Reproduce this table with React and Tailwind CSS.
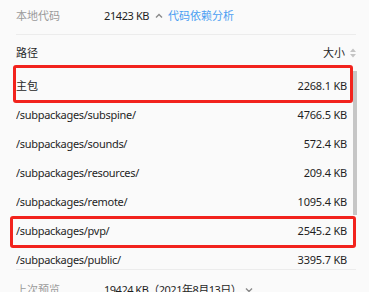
import React from 'react';

const rows = [
  { path: '主包', size: '2268.1 KB', cjk: true },
  { path: '/subpackages/subspine/', size: '4766.5 KB' },
  { path: '/subpackages/sounds/', size: '572.4 KB' },
  { path: '/subpackages/resources/', size: '209.4 KB' },
  { path: '/subpackages/remote/', size: '1095.4 KB' },
  { path: '/subpackages/pvp/', size: '2545.2 KB' },
  { path: '/subpackages/public/', size: '3395.7 KB' },
  { path: '/subpackages/ui/', size: '1210.3 KB' },
];

const Chevron = ({ up }) => (
  <svg width="8" height="6" viewBox="0 0 8 6" className="text-[#8a8a8a]">
    <polyline
      points={up ? '1,4.5 4,1.5 7,4.5' : '1,1.5 4,4.5 7,1.5'}
      fill="none"
      stroke="currentColor"
      strokeWidth="1.4"
    />
  </svg>
);

const SortIcon = () => (
  <svg width="6" height="10" viewBox="0 0 6 10" className="text-[#c4c4c4]">
    <polygon points="0,4 3,0.5 6,4" fill="currentColor" />
    <polygon points="0,6 3,9.5 6,6" fill="currentColor" />
  </svg>
);

export default function App() {
  return (
    <div
      className="relative w-[369px] h-[292px] overflow-hidden bg-[#fafafa] text-[11px] text-[#1f1f1f]"
      style={{ fontFamily: '"Noto Sans", "Noto Sans CJK SC", sans-serif' }}
    >
      <div className="pl-4 pr-[13px]">
        {/* summary */}
        <div className="h-[35px] flex items-center pb-[2px] border-b border-[#ececec]">
          <span className="w-[88px] text-[#9a9a9a]">本地代码</span>
          <span className="tracking-[-0.4px]">21423 KB</span>
          <span className="ml-[6px] mr-[5px] flex items-center"><Chevron up /></span>
          <span className="text-[#4b9ef2]">代码依赖分析</span>
        </div>

        {/* table head */}
        <div className="h-[37px] flex items-start pt-[11px] leading-[14px]">
          <span className="flex-1">路径</span>
          <span>大小</span>
          <span className="ml-[5px] mt-[2px] flex"><SortIcon /></span>
        </div>

        {/* rows */}
        <div className="h-[198px] overflow-hidden border-b border-[#ececec]">
          {rows.map((r) => (
            <div key={r.path} className="h-[29px] flex items-center justify-between pr-[9px]">
              <span className={r.cjk ? '' : 'tracking-[-0.3px]'}>{r.path}</span>
              <span className="tracking-[-0.2px]">{r.size}</span>
            </div>
          ))}
        </div>

        {/* last preview */}
        <div className="h-[30px] flex items-center pt-[10px]">
          <span className="w-[88px] text-[#9a9a9a]">上次预览</span>
          <span className="tracking-[-0.5px]">19424 KB（2021年8月13日）</span>
          <span className="ml-[4px] flex items-center"><Chevron /></span>
        </div>
      </div>

      {/* scrollbar thumb */}
      <div className="absolute left-[353px] top-[71px] w-[4px] h-[144px] bg-[#c6c6c6]" />

      {/* highlight boxes */}
      <div className="absolute left-[13px] top-[65px] w-[340px] h-[38px] border-[3px] border-[#f2231d] rounded-[3px]" />
      <div className="absolute left-[10px] top-[216px] w-[346px] h-[32px] border-[3px] border-[#f2231d] rounded-[3px]" />
    </div>
  );
}
